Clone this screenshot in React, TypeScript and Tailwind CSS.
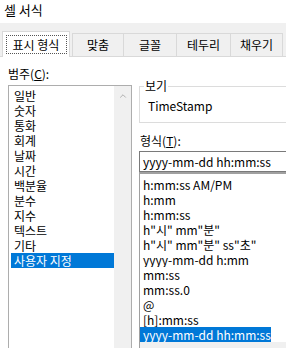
import { ChevronUp } from "lucide-react";

const CATEGORIES = [
  "일반",
  "숫자",
  "통화",
  "회계",
  "날짜",
  "시간",
  "백분율",
  "분수",
  "지수",
  "텍스트",
  "기타",
  "사용자 지정",
];

const FORMATS = [
  'h:mm:ss AM/PM',
  "h:mm",
  "h:mm:ss",
  'h"시" mm"분"',
  'h"시" mm"분" ss"초"',
  "yyyy-mm-dd h:mm",
  "mm:ss",
  "mm:ss.0",
  "@",
  "[h]:mm:ss",
  "yyyy-mm-dd hh:mm:ss",
];

const TABS = [
  { label: "맞춤", w: "w-[52px]" },
  { label: "글꼴", w: "w-[53px]" },
  { label: "테두리", w: "w-[54px]" },
  { label: "채우기", w: "w-[52px]" },
];

export default function App() {
  return (
    <div className="relative h-[348px] w-[286px] overflow-hidden bg-white font-['Noto_Sans_CJK_KR',sans-serif] text-[12px] text-black">
      {/* 제목 */}
      <div className="h-[23px] pl-[4px] pt-[1px] text-[13px] leading-[18px]">셀 서식</div>

      {/* 탭 */}
      <div className="flex h-[34px] items-end border-b border-[#d9d9d9] bg-[#f0f0f0] pl-[2px]">
        <div className="relative top-px flex h-[26px] w-[68px] items-center justify-center border border-b-0 border-[#d9d9d9] bg-white">
          <div className="flex h-[19px] w-[61px] items-center justify-center border border-dotted border-[#555]">
            표시 형식
          </div>
        </div>
        <div className="ml-[2px] flex">
          {TABS.map((t, i) => (
            <div
              key={t.label}
              className={`flex h-[23px] ${t.w} items-center justify-center border border-b-0 border-[#d9d9d9] bg-[#f0f0f0] ${
                i > 0 ? "border-l-0" : ""
              }`}
            >
              {t.label}
            </div>
          ))}
        </div>
      </div>

      <div className="flex pt-[8px]">
        {/* 범주 */}
        <div className="ml-[8px] w-[124px] shrink-0">
          <div className="mb-[3px] h-[17px] leading-[17px]">
            범주(<span className="underline">C</span>):
          </div>
          <div className="flex h-[280px] border border-[#adadad]">
            <div className="flex-1 pl-[2px] pt-[2px]">
              {CATEGORIES.map((c, i) => (
                <div
                  key={c}
                  className={`h-[15px] overflow-hidden pl-[3px] leading-[15px] ${
                    i === CATEGORIES.length - 1 ? "bg-[#0078d7] text-white" : ""
                  }`}
                >
                  {c}
                </div>
              ))}
            </div>
            <div className="flex w-[17px] justify-center bg-[#f0f0f0] pt-[5px]">
              <ChevronUp className="h-[10px] w-[10px] text-[#a3a3a3]" strokeWidth={2} />
            </div>
          </div>
        </div>

        {/* 보기 / 형식 */}
        <div className="ml-[7px] w-[170px] shrink-0">
          <div className="relative mt-[21px] h-[37px] border border-[#dcdcdc] pl-[8px] pt-[11px] leading-[15px]">
            <span className="absolute -top-[9px] left-[4px] bg-white px-[1px] leading-[16px]">보기</span>
            TimeStamp
          </div>
          <div className="mt-[11px] h-[14px] pl-px leading-[14px]">
            형식(<span className="underline">T</span>):
          </div>
          <div className="mt-[3px] h-[21px] border border-r-0 border-[#7a7a7a] pl-[3px] leading-[19px]">
            yyyy-mm-dd hh:mm:ss
          </div>
          <div className="h-[200px] border-l border-t-2 border-[#a0a0a0] bg-[#f0f0f0]">
            <div className="bg-white pt-[3px]">
              {FORMATS.map((f, i) => (
                <div
                  key={f}
                  className={`h-[15px] overflow-hidden whitespace-pre pl-[3px] leading-[15px] ${
                    i === FORMATS.length - 1 ? "w-[131px] bg-[#0078d7] text-white" : ""
                  }`}
                >
                  {f}
                </div>
              ))}
            </div>
          </div>
        </div>
      </div>
    </div>
  );
}
